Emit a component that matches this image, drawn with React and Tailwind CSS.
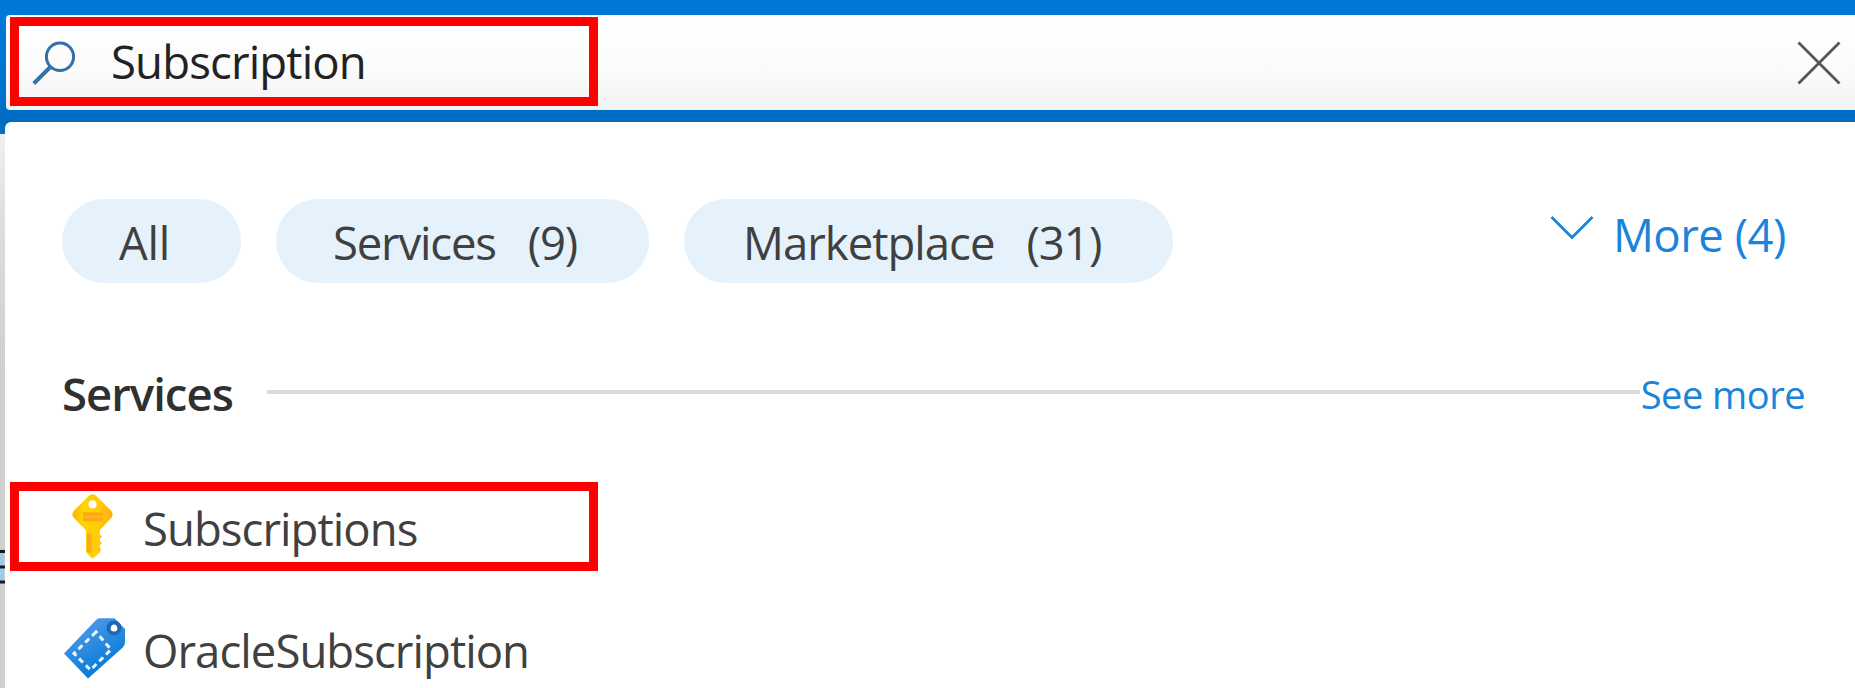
function SearchIcon() {
  return (
    <svg className="block h-[46px] w-[46px] shrink-0" viewBox="0 0 46 46" fill="none" stroke="#3570a6" strokeWidth="3">
      <ellipse cx="28" cy="15.8" rx="13.6" ry="13.8" />
      <path d="M18.5 25.8 1.8 42.5" strokeWidth="4" />
    </svg>
  );
}

function KeyIcon() {
  return (
    <svg className="block h-16 w-[41px] shrink-0" viewBox="0 0 41 64">
      <defs>
        <linearGradient id="key" x1="0" x2="1" y1="0" y2="0">
          <stop offset="0" stopColor="#ffb50d" />
          <stop offset=".3" stopColor="#ffd400" />
          <stop offset=".65" stopColor="#ffcb08" />
          <stop offset="1" stopColor="#ffad10" />
        </linearGradient>
      </defs>
      <path
        fill="url(#key)"
        fillRule="evenodd"
        d="M17.5 1.2Q20.5-.9 23.5 1.2L39.6 17.2Q41.6 20.5 39.6 23.5L27.8 36.2V40.5L30 42.6 27.8 44.8V46.8L30 49 27.8 51.2V53.2L29 55 27.6 58.4 22.6 63.2Q20.5 64.6 18.6 63.2L14 58V36.2L1.4 23.5Q-.6 20.5 1.4 17.2ZM20.5 6.2A4.2 4.2 0 1 0 20.5 14.6 4.2 4.2 0 1 0 20.5 6.2Z"
      />
      <path fill="#fdb813" d="M11 18.5h20v9H11z" />
      <path fill="#ffa814" d="M11 18.5h20v3H11zM11 24h20v3H11zM15 39.5h4.5v20L15 57.3z" />
    </svg>
  );
}

function TagIcon() {
  return (
    <svg className="block h-[62px] w-[62px] shrink-0" viewBox="0 0 62 62">
      <defs>
        <linearGradient id="tag" x1="0" x2=".55" y1="0" y2="1">
          <stop offset="0" stopColor="#5ea0ef" />
          <stop offset="1" stopColor="#0078d4" />
        </linearGradient>
      </defs>
      <path fill="url(#tag)" d="M35.5 1.2H50.5L61 12V25Q61 28 58.8 30.5L24 61.5 0 36.5 32 3Q33.5 1.2 35.5 1.2Z" />
      <circle cx="50" cy="11" r="5.5" fill="#fff" stroke="#1f69b3" strokeWidth="4" />
      <path fill="#1f69b3" d="M44 14.5 49.5 5.5 47 4 43 8ZM56 14.5 50.5 5.5 53 4 57 8Z" />
      <path
        fill="none"
        stroke="#eef6fe"
        strokeWidth="3"
        strokeDasharray="5.5 4"
        d="M32 15 10 36.5 26.5 53 47 32.5Z"
      />
    </svg>
  );
}

function Pill({ label, count }) {
  return (
    <button className="flex h-[84px] items-center gap-8 rounded-full bg-[#e5f1fb] pl-[57px] pt-1">
      <span>{label}</span>
      {count && <span>{count}</span>}
    </button>
  );
}

export default function App() {
  return (
    <div className="relative flex h-[688px] w-[1855px] flex-col overflow-hidden bg-[linear-gradient(#f0f0f0_134px,#dedede_220px,#cfcfcf_370px)] font-['Open_Sans','Noto_Sans',sans-serif] text-[45.5px] leading-none text-[#404040]">
      <header className="h-[134px] shrink-0 bg-[linear-gradient(#0078d7_60px,#006cc4_120px,#0072cc)] pl-[6px] pt-[15px]">
        <div className="flex h-[95px] items-start rounded-l bg-white bg-[linear-gradient(#fff,#fcfcfc_50%,#f3f3f3)] pl-[26px] pt-[26px] text-[#222]">
          <SearchIcon />
          <span className="ml-[33px] -mt-[2px] tracking-[-0.85px]">Subscription</span>
          <svg className="ml-auto mr-[14px] block h-[44px] w-[44px]" viewBox="0 0 44 44" stroke="#555" strokeWidth="2.8">
            <path d="M1.5 1.5 42.5 42.5M42.5 1.5 1.5 42.5" />
          </svg>
        </div>
      </header>

      <main className="z-10 -mt-[12px] ml-[5px] flex h-[566px] shrink-0 flex-col rounded-tl-md bg-white">
        <nav className="flex pl-[57px] pt-[77px]">
          <div className="flex w-[214px] tracking-[-0.2px] [&>button]:w-[179px]">
            <Pill label="All" />
          </div>
          <div className="flex w-[408px] tracking-[-1.2px] [&>button]:w-[373px]">
            <Pill label="Services" count="(9)" />
          </div>
          <div className="flex tracking-[-1px] [&>button]:w-[489px] [&>button]:pl-[59px]">
            <Pill label="Marketplace" count="(31)" />
          </div>
          <button className="ml-auto mr-[69px] flex items-start gap-[19px] pt-[12px] text-[#1a84da]">
            <svg className="mt-[4px] block h-[26px] w-[44px]" viewBox="0 0 44 26" fill="none" stroke="currentColor" strokeWidth="2.8">
              <path d="M1.5 2 22 22.5 42.5 2" />
            </svg>
            <span className="mt-px tracking-[-0.5px]">More (4)</span>
          </button>
        </nav>

        <section className="mt-[84px] flex h-[60px] items-start pl-[57px] pr-[50px]">
          <h2 className="mt-[4px] w-[205px] shrink-0 font-semibold tracking-[-1px] text-[#303030]">Services</h2>
          <div className="mt-[23px] h-[4px] grow bg-[#d9d9d9]" />
          <a className="ml-[1px] mt-[8px] shrink-0 text-[38px] tracking-[-0.5px] text-[#1a84da]">See more</a>
        </section>

        <ul className="flex flex-col">
          <li className="mt-[67px] flex h-16 items-start">
            <span className="flex w-[138px] pl-[67px]"><KeyIcon /></span>
            <span className="mt-[12px] tracking-[-0.95px]">Subscriptions</span>
          </li>
          <li className="mt-[59px] flex items-start">
            <span className="flex w-[138px] pl-[59px]"><TagIcon /></span>
            <span className="mt-[11px] tracking-[-0.95px]">OracleSubscription</span>
          </li>
        </ul>
      </main>

      <svg className="absolute left-0 top-[546px] h-[40px] w-[5px]" viewBox="0 0 5 40">
        <path fill="#9bcdeb" d="M0 3h4v34H0z" />
        <path fill="#1a1a1a" d="M0 4h5v3H0zM0 19.5h5v3H0zM0 34.5h5v3H0z" />
      </svg>
      <div className="absolute left-[10px] top-[17px] z-20 h-[89px] w-[588px] border-[9px] border-[#f00]" />
      <div className="absolute left-[10px] top-[482px] z-20 h-[89px] w-[588px] border-[9px] border-[#f00]" />
    </div>
  );
}
